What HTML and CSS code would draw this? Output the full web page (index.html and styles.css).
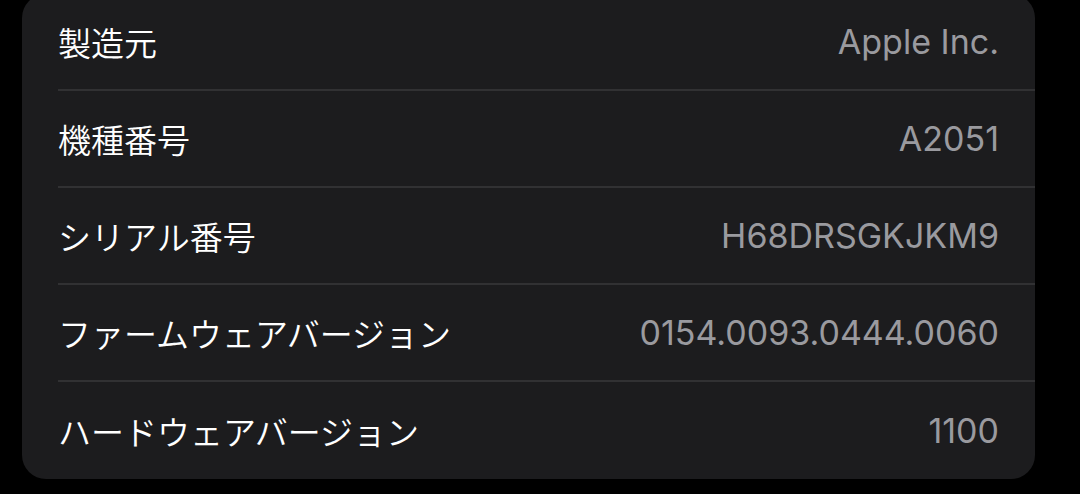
FILE: index.html
```html
<!DOCTYPE html>
<html lang="ja">
<head>
    <meta charset="UTF-8">
    <meta name="viewport" content="width=device-width, initial-scale=1.0">
    <title>情報</title>
    <link rel="stylesheet" href="styles.css">
</head>
<body>

    <!-- Device info card -->
    <div class="card">
        <div class="row">
            <span class="label">製造元</span>
            <span class="value">Apple Inc.</span>
        </div>
        <div class="row">
            <span class="label">機種番号</span>
            <span class="value">A2051</span>
        </div>
        <div class="row">
            <span class="label">シリアル番号</span>
            <span class="value">H68DRSGKJKM9</span>
        </div>
        <div class="row">
            <span class="label">ファームウェアバージョン</span>
            <span class="value">0154.0093.0444.0060</span>
        </div>
        <div class="row">
            <span class="label">ハードウェアバージョン</span>
            <span class="value">1100</span>
        </div>
    </div>

</body>
</html>
```

FILE: styles.css
```css
/* Global Styles */
body {
    margin: 0;
    padding: 0;
    background: #000000;
    font-family: Inter, "Noto Sans CJK JP", sans-serif;
    overflow: hidden;
}

.card {
    margin: -6px 0 0 22px;
    width: 1013px;
    background: #1c1c1e;
    border-radius: 24px;
    overflow: hidden;
}

.row {
    display: flex;
    justify-content: space-between;
    align-items: center;
    height: 97px;
    margin-left: 36px;
    padding-right: 36px;
    box-sizing: border-box;
    border-bottom: 2px solid #313133;
}

.row:last-child {
    border-bottom: none;
}

.label {
    font-family: "Noto Sans CJK JP", sans-serif;
    font-size: 33px;
    font-weight: 350;
    color: #ffffff;
}

.value {
    font-size: 34px;
    color: #9a9a9f;
}
```
